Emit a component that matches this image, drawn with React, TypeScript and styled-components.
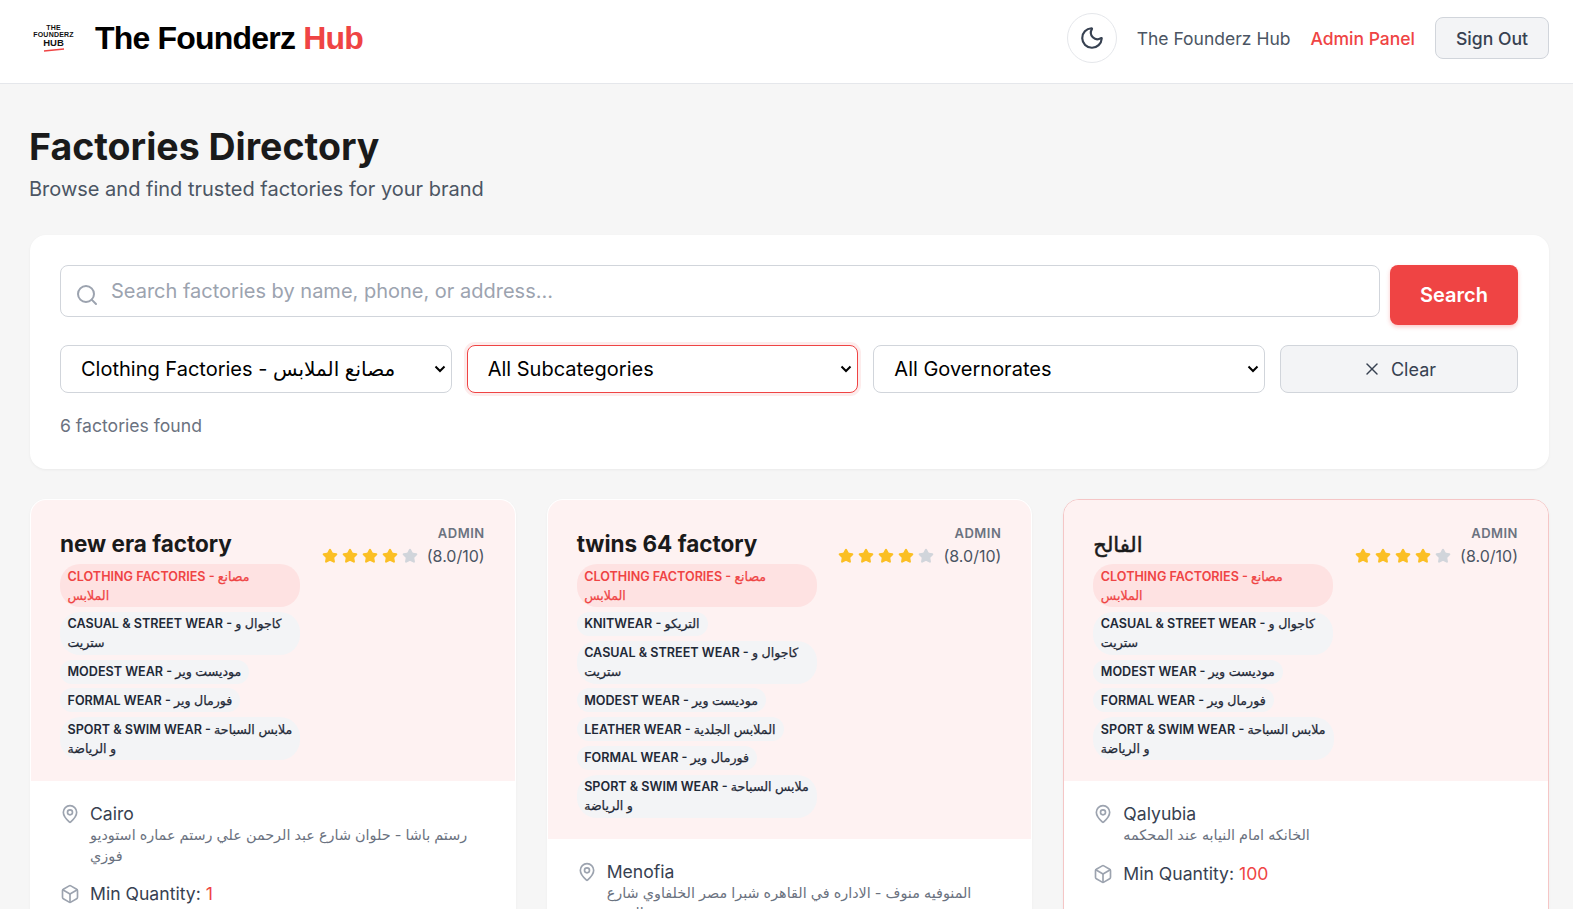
import styled, { createGlobalStyle } from "styled-components";
import { Box, MapPin, Moon, Search, Star, X } from "lucide-react";

const GlobalStyle = createGlobalStyle`
  html, body {
    margin: 0;
    height: 100%;
    overflow: hidden;
    background: #f6f6f6;
    font-family: Inter, "DejaVu Sans", sans-serif;
    color: #111827;
  }
  * { box-sizing: border-box; }
`;

const chevron =
  "data:image/svg+xml,%3Csvg xmlns='http://www.w3.org/2000/svg' width='12' height='8' viewBox='0 0 12 8'%3E%3Cpath d='M1.5 1.5 6 6l4.5-4.5' fill='none' stroke='%23000' stroke-width='2'/%3E%3C/svg%3E";

const Header = styled.header`
  height: 84px;
  background: #fff;
  border-bottom: 1px solid #e5e7eb;
  padding: 0 24px 7px 30px;
  display: flex;
  align-items: center;
  justify-content: space-between;
`;

const Brand = styled.div`
  display: flex;
  align-items: center;
  gap: 18px;
`;

const Logo = styled.div`
  width: 47px;
  display: flex;
  flex-direction: column;
  align-items: center;
  font-family: "Liberation Sans", sans-serif;
  font-weight: 700;
  color: #111;
  line-height: 1;
`;

const LogoSmall = styled.span`
  font-size: 7px;
  letter-spacing: 0.2px;
`;

const LogoBig = styled.span`
  font-size: 9.5px;
`;

const BrandName = styled.div`
  font-family: "Liberation Sans", sans-serif;
  font-size: 32px;
  font-weight: 700;
  letter-spacing: -0.8px;
  color: #000;
`;

const Red = styled.span`
  color: #ef4444;
`;

const Nav = styled.nav`
  display: flex;
  align-items: center;
`;

const ThemeButton = styled.button`
  width: 50px;
  height: 50px;
  border-radius: 50%;
  border: 1px solid #e5e7eb;
  background: #fff;
  color: #374151;
  display: flex;
  align-items: center;
  justify-content: center;
  padding: 0;
  margin-right: 20px;
`;

const NavLink = styled.a<{ $active?: boolean }>`
  font-size: 17.5px;
  font-weight: ${(p) => (p.$active ? 500 : 400)};
  color: ${(p) => (p.$active ? "#ef4444" : "#4b5563")};
  margin-right: 20px;
`;

const SignOut = styled.button`
  width: 114px;
  height: 42px;
  border-radius: 8px;
  border: 1px solid #d1d5db;
  background: #f3f4f6;
  color: #374151;
  font-family: inherit;
  font-size: 17.6px;
  font-weight: 500;
`;

const Main = styled.main`
  padding: 0 24px 0 30px;
`;

const Intro = styled.div`
  padding-top: 40px;
  margin: 0 0 31px -1px;
`;

const Title = styled.h1`
  margin: 0;
  font-size: 37.5px;
  line-height: 46px;
  font-weight: 700;
  color: #1a1a1a;
`;

const Subtitle = styled.p`
  margin: 4px 0 0;
  font-size: 20px;
  line-height: 30px;
  color: #4b5563;
`;

const FilterPanel = styled.section`
  background: #fff;
  border-radius: 16px;
  padding: 30px 31px 30px 30px;
  height: 234px;
  box-shadow: 0 1px 3px rgba(0, 0, 0, 0.05);
  margin-bottom: 30px;
`;

const SearchRow = styled.div`
  display: flex;
  align-items: flex-start;
  gap: 10px;
  margin-bottom: 20px;
`;

const SearchField = styled.div`
  flex: 1;
  height: 52px;
  position: relative;
`;

const SearchIcon = styled(Search)`
  position: absolute;
  left: 15px;
  top: 18px;
  color: #9ca3af;
`;

const SearchInput = styled.input`
  width: 100%;
  height: 100%;
  border: 1px solid #d1d5db;
  border-radius: 8px;
  padding: 0 16px 0 50px;
  font-family: inherit;
  font-size: 20px;
  background: #fff;
  &::placeholder {
    color: #9ca3af;
    opacity: 1;
  }
`;

const SearchButton = styled.button`
  width: 128px;
  height: 60px;
  border: none;
  border-radius: 8px;
  background: #ef4444;
  color: #fff;
  font-family: inherit;
  font-size: 20px;
  font-weight: 600;
  box-shadow: 0 2px 4px rgba(239, 68, 68, 0.3);
`;

const FilterRow = styled.div`
  display: grid;
  grid-template-columns: repeat(3, 1fr) 238px;
  gap: 15px;
  height: 48px;
`;

const Select = styled.select<{ $focused?: boolean }>`
  appearance: none;
  height: 48px;
  border: 1px solid ${(p) => (p.$focused ? "#ef4444" : "#d1d5db")};
  box-shadow: ${(p) => (p.$focused ? "0 0 0 3px rgba(239, 68, 68, 0.1)" : "none")};
  border-radius: 8px;
  background: #fff url("${chevron}") no-repeat right 5px center;
  color: #000;
  padding: 0 20px;
  font-family: inherit;
  font-size: 20px;
`;

const ClearButton = styled.button`
  height: 48px;
  border: 1px solid #d1d5db;
  border-radius: 8px;
  background: #f3f4f6;
  color: #374151;
  font-family: inherit;
  font-size: 18px;
  display: flex;
  align-items: center;
  justify-content: center;
  gap: 9px;
`;

const ResultCount = styled.p`
  margin: 21px 0 0;
  font-size: 17.6px;
  line-height: 24px;
  color: #6b7280;
`;

const CardGrid = styled.div`
  display: grid;
  grid-template-columns: repeat(3, 1fr);
  gap: 31px;
`;

const Card = styled.article<{ $hover?: boolean }>`
  background: #fff;
  border-radius: 16px;
  overflow: hidden;
  border: 1px solid ${(p) => (p.$hover ? "#f5c6c6" : "transparent")};
  box-shadow: 0 1px 3px rgba(0, 0, 0, 0.04);
`;

const CardTop = styled.div`
  background: #fef2f2;
  padding: 26px 30px 21px 29px;
  display: flex;
  justify-content: space-between;
  align-items: flex-start;
`;

const CardName = styled.h3`
  margin: 0 0 2px;
  height: 36px;
  font-size: 22.5px;
  line-height: 36px;
  font-weight: 700;
  color: #1a1a1a;
`;

const ArabicName = styled.span`
  font-size: 21px;
  font-weight: 400;
  -webkit-text-stroke: 0.5px currentColor;
`;

const TagList = styled.div`
  display: flex;
  flex-direction: column;
  align-items: flex-start;
  gap: 4.8px;
  max-width: 240px;
`;

const Tag = styled.span<{ $primary?: boolean }>`
  background: ${(p) => (p.$primary ? "#fee2e2" : "#f3f4f6")};
  color: ${(p) => (p.$primary ? "#ef4444" : "#1f2937")};
  font-size: 12.6px;
  font-weight: 600;
  line-height: 19px;
  padding: 2.5px 8px 2.5px 7.5px;
  border-radius: 20px;
`;

const Arabic = styled.span`
  font-weight: 400;
  -webkit-text-stroke: 0.25px currentColor;
`;

const FirstLine = styled.span`
  white-space: nowrap;
`;

const RatingBox = styled.div`
  display: flex;
  flex-direction: column;
  align-items: flex-end;
  margin-top: -3px;
`;

const AdminLabel = styled.span`
  font-size: 13px;
  line-height: 20px;
  font-weight: 600;
  letter-spacing: 0.5px;
  color: #6b7280;
`;

const StarRow = styled.div`
  display: flex;
  align-items: center;
  gap: 4px;
  margin-top: 1px;
`;

const RatingStar = styled(Star)<{ $on: boolean }>`
  color: ${(p) => (p.$on ? "#fbbf24" : "#d1d5db")};
  fill: currentColor;
`;

const RatingText = styled.span`
  font-size: 16px;
  line-height: 24px;
  color: #4b5563;
  margin-left: 5px;
`;

const CardBody = styled.div`
  padding: 21px 30px 24px 29px;
  display: flex;
  flex-direction: column;
  gap: 16px;
`;

const InfoRow = styled.div`
  display: flex;
  align-items: flex-start;
  gap: 10px;
`;

const InfoIcon = styled.span`
  color: #9ca3af;
  display: flex;
  padding-top: 2px;
`;

const InfoMain = styled.div`
  font-size: 17.6px;
  line-height: 23px;
  color: #374151;
`;

const Address = styled.div`
  font-size: 14.4px;
  line-height: 20.5px;
  color: #6b7280;
`;

const clothing = { en: "CLOTHING FACTORIES", ar: "مصانع الملابس" };
const casual = { en: "CASUAL & STREET WEAR", ar: "كاجوال و ستريت" };
const modest = { en: "MODEST WEAR", ar: "موديست وير" };
const formal = { en: "FORMAL WEAR", ar: "فورمال وير" };
const sport = { en: "SPORT & SWIM WEAR", ar: "ملابس السباحة", rest: "و الرياضة" };
const knit = { en: "KNITWEAR", ar: "التريكو" };
const leather = { en: "LEATHER WEAR", ar: "الملابس الجلدية" };

type TagData = { en: string; ar: string; rest?: string };

const factories: {
  name: React.ReactNode;
  city: string;
  address: string;
  min: number;
  hover?: boolean;
  tags: TagData[];
}[] = [
  {
    name: "new era factory",
    city: "Cairo",
    address: "رستم باشا - حلوان شارع عبد الرحمن علي رستم عماره استوديو فوزي",
    min: 1,
    tags: [casual, modest, formal, sport],
  },
  {
    name: "twins 64 factory",
    city: "Menofia",
    address: "المنوفيه منوف - الاداره في القاهره شبرا مصر الخلفاوي شارع الترعة",
    min: 50,
    tags: [knit, casual, modest, leather, formal, sport],
  },
  {
    name: <ArabicName>الفالح</ArabicName>,
    city: "Qalyubia",
    address: "الخانكه امام النيابه عند المحكمه",
    min: 100,
    hover: true,
    tags: [casual, modest, formal, sport],
  },
];

function TagItem({ tag, primary }: { tag: TagData; primary?: boolean }) {
  if (tag.rest) {
    return (
      <Tag>
        <FirstLine>
          {tag.en} - <Arabic>{tag.ar}</Arabic>
        </FirstLine>{" "}
        <Arabic>{tag.rest}</Arabic>
      </Tag>
    );
  }
  return (
    <Tag $primary={primary}>
      {tag.en} - <Arabic>{tag.ar}</Arabic>
    </Tag>
  );
}

export default function App() {
  return (
    <>
      <GlobalStyle />
      <Header>
        <Brand>
          <Logo>
            <LogoSmall>THE</LogoSmall>
            <LogoSmall>FOUNDERZ</LogoSmall>
            <LogoBig>HUB</LogoBig>
            <svg width="22" height="4" viewBox="0 0 22 4">
              <path d="M1 3 L21 1" stroke="#ef4444" strokeWidth="1.4" />
            </svg>
          </Logo>
          <BrandName>
            The Founderz <Red>Hub</Red>
          </BrandName>
        </Brand>
        <Nav>
          <ThemeButton>
            <Moon size={26} strokeWidth={2} />
          </ThemeButton>
          <NavLink>The Founderz Hub</NavLink>
          <NavLink $active>Admin Panel</NavLink>
          <SignOut>Sign Out</SignOut>
        </Nav>
      </Header>
      <Main>
        <Intro>
          <Title>Factories Directory</Title>
          <Subtitle>Browse and find trusted factories for your brand</Subtitle>
        </Intro>
        <FilterPanel>
          <SearchRow>
            <SearchField>
              <SearchIcon size={24} strokeWidth={2} />
              <SearchInput placeholder="Search factories by name, phone, or address..." />
            </SearchField>
            <SearchButton>Search</SearchButton>
          </SearchRow>
          <FilterRow>
            <Select>
              <option>Clothing Factories - مصانع الملابس</option>
            </Select>
            <Select $focused>
              <option>All Subcategories</option>
            </Select>
            <Select>
              <option>All Governorates</option>
            </Select>
            <ClearButton>
              <X size={20} strokeWidth={1.75} />
              Clear
            </ClearButton>
          </FilterRow>
          <ResultCount>6 factories found</ResultCount>
        </FilterPanel>
        <CardGrid>
          {factories.map((f) => (
            <Card key={f.city} $hover={f.hover}>
              <CardTop>
                <div>
                  <CardName>{f.name}</CardName>
                  <TagList>
                    <TagItem tag={clothing} primary />
                    {f.tags.map((t) => (
                      <TagItem key={t.en} tag={t} />
                    ))}
                  </TagList>
                </div>
                <RatingBox>
                  <AdminLabel>ADMIN</AdminLabel>
                  <StarRow>
                    {[1, 2, 3, 4, 5].map((n) => (
                      <RatingStar key={n} size={16} $on={n <= 4} />
                    ))}
                    <RatingText>(8.0/10)</RatingText>
                  </StarRow>
                </RatingBox>
              </CardTop>
              <CardBody>
                <InfoRow>
                  <InfoIcon>
                    <MapPin size={20} />
                  </InfoIcon>
                  <InfoMain>
                    {f.city}
                    <Address>{f.address}</Address>
                  </InfoMain>
                </InfoRow>
                <InfoRow>
                  <InfoIcon>
                    <Box size={20} />
                  </InfoIcon>
                  <InfoMain>
                    Min Quantity: <Red>{f.min}</Red>
                  </InfoMain>
                </InfoRow>
              </CardBody>
            </Card>
          ))}
        </CardGrid>
      </Main>
    </>
  );
}
